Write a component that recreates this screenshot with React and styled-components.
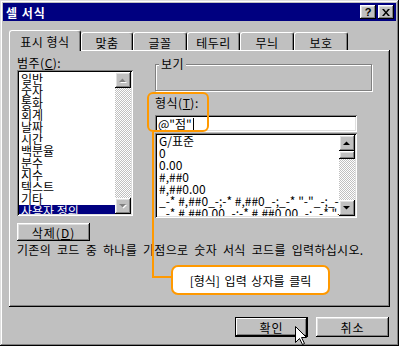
import styled, { createGlobalStyle } from 'styled-components'

const GlobalStyle = createGlobalStyle`
  html, body {
    margin: 0;
    padding: 0;
    background: #c0c0c0;
  }
  body {
    font-family: "Noto Sans CJK KR", "Liberation Sans", sans-serif;
    font-size: 12px;
    color: #000;
  }
`

const raised = `
  box-shadow: inset -1px -1px #000, inset 1px 1px #fff, inset -2px -2px #808080, inset 2px 2px #dfdfdf;
`

const sunken = `
  box-shadow: inset 1px 1px #808080, inset -1px -1px #fff, inset 2px 2px #000, inset -2px -2px #dfdfdf;
`

const Window = styled.div`
  position: relative;
  width: 399px;
  height: 346px;
  box-sizing: border-box;
  padding: 3px;
  background: #c0c0c0;
  box-shadow: inset -1px -1px #000, inset 1px 1px #dfdfdf, inset -2px -2px #808080, inset 2px 2px #fff;
  display: flex;
  flex-direction: column;
  overflow: hidden;
`

const TitleBar = styled.div`
  height: 18px;
  background: #000080;
  color: #fff;
  display: flex;
  align-items: center;
  justify-content: space-between;
  padding: 0 2px 0 3px;
`

const TitleText = styled.span`
  font-weight: bold;
  font-size: 12px;
  letter-spacing: 1px;
`

const TitleButtons = styled.div`
  display: flex;
  gap: 2px;
`

const TitleButton = styled.div`
  width: 16px;
  height: 14px;
  background: #c0c0c0;
  ${raised}
  display: flex;
  align-items: center;
  justify-content: center;
  color: #000;
  font: bold 11px "Liberation Sans", sans-serif;
`

const Body = styled.div`
  display: flex;
  flex-direction: column;
  padding: 9px 6px 0 6px;
`

const TabRow = styled.div`
  display: flex;
  align-items: flex-end;
  height: 20px;
  position: relative;
  z-index: 1;
`

const Tab = styled.div`
  width: ${p => p.$w}px;
  height: ${p => (p.$active ? 21 : 18)}px;
  margin-bottom: ${p => (p.$active ? -1 : 0)}px;
  box-sizing: border-box;
  background: #c0c0c0;
  border-radius: 3px 3px 0 0;
  border-top: 1px solid #fff;
  border-left: 1px solid #fff;
  border-right: 1px solid #000;
  box-shadow: inset -1px 0 #808080;
  display: flex;
  align-items: center;
  justify-content: center;
  font-size: 12px;
  letter-spacing: 0.5px;
  padding-top: ${p => (p.$active ? 0 : 1)}px;
`

const Panel = styled.div`
  position: relative;
  height: 257px;
  box-sizing: border-box;
  padding: 5px 8px 0 8px;
  box-shadow: inset -1px -1px #000, inset 1px 1px #fff, inset -2px -2px #808080;
  display: flex;
  flex-direction: column;
`

const Columns = styled.div`
  display: flex;
  align-items: flex-start;
`

const LeftCol = styled.div`
  width: 116px;
  display: flex;
  flex-direction: column;
`

const RightCol = styled.div`
  margin-left: 22px;
  display: flex;
  flex-direction: column;
`

const Label = styled.div`
  height: 15px;
  line-height: 15px;
  font-size: 12px;
  letter-spacing: 0.5px;
  margin-top: ${p => p.$mt || 0}px;
`

const ListBox = styled.div`
  width: ${p => p.$w}px;
  height: ${p => p.$h}px;
  margin-top: ${p => p.$mt || 0}px;
  box-sizing: border-box;
  background: #fff;
  ${sunken}
  padding: 2px;
  display: flex;
`

const Items = styled.div`
  flex: 1;
  overflow: hidden;
  padding-top: ${p => p.$pt || 0}px;
`

const Item = styled.div`
  height: 12px;
  line-height: 12px;
  font-size: 12px;
  padding-left: 2px;
  white-space: nowrap;
  background: ${p => (p.$selected ? '#000080' : 'transparent')};
  color: ${p => (p.$selected ? '#fff' : '#000')};
`

const ScrollBar = styled.div`
  width: 16px;
  display: flex;
  flex-direction: column;
`

const ScrollTrack = styled.div`
  flex: 1;
  background-color: #c0c0c0;
  background-image: conic-gradient(#fff 25%, transparent 0 50%, #fff 0 75%, transparent 0);
  background-size: 2px 2px;
`

const ScrollButton = styled.div`
  height: ${p => p.$h || 16}px;
  background: #c0c0c0;
  ${raised}
  display: flex;
  align-items: center;
  justify-content: center;
`

const PushButton = styled.div`
  width: 73px;
  height: ${p => p.$h || 20}px;
  box-sizing: border-box;
  background: #c0c0c0;
  ${p =>
    p.$default
      ? 'box-shadow: inset 0 0 0 1px #000, inset -2px -2px #000, inset 2px 2px #fff, inset -3px -3px #808080;'
      : raised}
  display: flex;
  align-items: center;
  justify-content: center;
  font-size: 12px;
  letter-spacing: 1px;
  margin-top: ${p => p.$mt || 0}px;
`

const GroupBox = styled.div`
  position: relative;
  width: 217px;
  height: 27px;
  box-sizing: border-box;
  margin-top: 9px;
  border: 1px solid #808080;
  box-shadow: inset 1px 1px #fff, 1px 1px #fff;
`

const GroupTitle = styled.span`
  position: absolute;
  top: -9px;
  left: 3px;
  padding: 0 2px;
  background: #c0c0c0;
  line-height: 15px;
  letter-spacing: 0.5px;
`

const TextInput = styled.div`
  width: 202px;
  height: 17px;
  margin-top: 5px;
  box-sizing: border-box;
  background: #fff;
  ${sunken}
  padding: 0 3px;
  display: flex;
  align-items: center;
  font-size: 12px;
`

const Caret = styled.span`
  display: inline-block;
  width: 1px;
  height: 12px;
  background: #000;
  margin-left: 1px;
`

const Description = styled.div`
  margin-top: 2px;
  height: 14px;
  line-height: 14px;
  font-size: 12px;
  letter-spacing: 0.3px;
  word-spacing: 3px;
  white-space: nowrap;
`

const Footer = styled.div`
  display: flex;
  justify-content: flex-end;
  gap: 8px;
  margin-top: 10px;
  padding-right: 1px;
`

const Highlight = styled.div`
  position: absolute;
  left: 138px;
  top: 42px;
  width: 62px;
  height: 40px;
  box-sizing: border-box;
  border: 2px solid #f90;
  border-radius: 6px;
`

const Leader = styled.div`
  position: absolute;
  left: 143px;
  top: 82px;
  width: 21px;
  height: 146px;
  box-sizing: border-box;
  border-left: 2px solid #f90;
  border-bottom: 2px solid #f90;
`

const Callout = styled.div`
  position: absolute;
  left: 162px;
  top: 215px;
  width: 159px;
  height: 30px;
  box-sizing: border-box;
  border: 2px solid #f90;
  border-radius: 7px;
  background: #fff;
  display: flex;
  align-items: center;
  justify-content: center;
  font-size: 12px;
  word-spacing: 2px;
`

const Cursor = styled.svg`
  position: absolute;
  left: 295px;
  top: 326px;
`

const Arrow = ({ dir, disabled }) => (
  <svg width="8" height="5" viewBox="0 0 8 5">
    {disabled && (
      <polygon
        points={dir === 'up' ? '1,5 8,5 4.5,1.5' : '1,1 8,1 4.5,4.5'}
        fill="#fff"
      />
    )}
    <polygon
      points={dir === 'up' ? '0,4 7,4 3.5,0.5' : '0,0 7,0 3.5,3.5'}
      fill={disabled ? '#808080' : '#000'}
    />
  </svg>
)

const categories = ['일반', '숫자', '통화', '회계', '날짜', '시간', '백분율', '분수', '지수', '텍스트', '기타', '사용자 정의']

const formats = [
  'G/표준',
  '0',
  '0.00',
  '#,##0',
  '#,##0.00',
  '_-* #,##0_-;-* #,##0_-;_-* "-"_-;_-@_-',
  '_-* #,##0.00_-;-* #,##0.00_-;_-* "-"??_-;_-@_-',
]

const tabs = [
  { label: '표시 형식', w: 72, active: true },
  { label: '맞춤', w: 52 },
  { label: '글꼴', w: 54 },
  { label: '테두리', w: 53 },
  { label: '무늬', w: 54 },
  { label: '보호', w: 54 },
]

export default function App() {
  return (
    <>
      <GlobalStyle />
      <Window>
        <TitleBar>
          <TitleText>셀 서식</TitleText>
          <TitleButtons>
            <TitleButton>?</TitleButton>
            <TitleButton>
              <svg width="8" height="7" viewBox="0 0 8 7">
                <path d="M0 0h2l2 2.5L6 0h2L5 3.5 8 7H6L4 4.5 2 7H0l3-3.5z" fill="#000" />
              </svg>
            </TitleButton>
          </TitleButtons>
        </TitleBar>

        <Body>
          <TabRow>
            {tabs.map(t => (
              <Tab key={t.label} $w={t.w} $active={t.active}>{t.label}</Tab>
            ))}
          </TabRow>

          <Panel>
            <Columns>
              <LeftCol>
                <Label>범주(<u>C</u>):</Label>
                <ListBox $w={116} $h={146}>
                  <Items $pt={1}>
                    {categories.map(c => (
                      <Item key={c} $selected={c === '사용자 정의'}>{c}</Item>
                    ))}
                  </Items>
                  <ScrollBar>
                    <ScrollButton><Arrow dir="up" disabled /></ScrollButton>
                    <ScrollTrack />
                    <ScrollButton><Arrow dir="down" disabled /></ScrollButton>
                  </ScrollBar>
                </ListBox>
                <PushButton $h={18} $mt={7}>삭제(<u>D</u>)</PushButton>
              </LeftCol>

              <RightCol>
                <GroupBox>
                  <GroupTitle>보기</GroupTitle>
                </GroupBox>
                <Label $mt={4}>형식(<u>T</u>):</Label>
                <TextInput>@"점"<Caret /></TextInput>
                <ListBox $w={202} $h={85} $mt={1}>
                  <Items>
                    {formats.map(f => (
                      <Item key={f}>{f}</Item>
                    ))}
                  </Items>
                  <ScrollBar>
                    <ScrollButton><Arrow dir="up" /></ScrollButton>
                    <ScrollButton $h={8} />
                    <ScrollTrack />
                    <ScrollButton><Arrow dir="down" /></ScrollButton>
                  </ScrollBar>
                </ListBox>
              </RightCol>
            </Columns>

            <Description>기존의 코드 중 하나를 기점으로 숫자 서식 코드를 입력하십시오.</Description>

            <Highlight />
            <Leader />
            <Callout>[형식] 입력 상자를 클릭</Callout>
          </Panel>

          <Footer>
            <PushButton $default>확인</PushButton>
            <PushButton>취소</PushButton>
          </Footer>
        </Body>

        <Cursor width="12" height="20" viewBox="0 0 12 20">
          <path d="M0.5 0.5 L0.5 16.5 L4.5 12.5 L7.5 18.5 L9.5 17.5 L6.5 11.5 L11.5 11.5 Z" fill="#fff" stroke="#000" strokeWidth="1" />
        </Cursor>
      </Window>
    </>
  )
}
